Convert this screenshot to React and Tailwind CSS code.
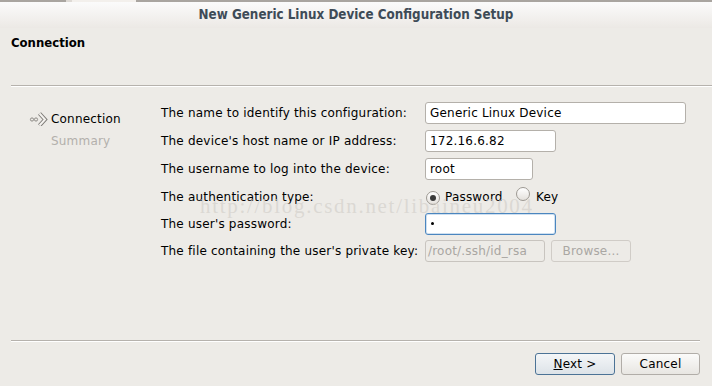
import React from 'react';

const font = { fontFamily: '"DejaVu Sans", "Liberation Sans", sans-serif' };
const condensed = { fontFamily: '"DejaVu Sans Condensed", "DejaVu Sans", sans-serif', fontStretch: 'condensed' };

function Radio({ checked }) {
  return (
    <span className="relative inline-flex h-[14px] w-[14px] items-center justify-center rounded-full border border-[#9d9993] bg-gradient-to-b from-white to-[#e4e1dc]">
      {checked && <span className="h-[6px] w-[6px] rounded-full bg-[#3a3a3a]" />}
    </span>
  );
}

function NavArrow() {
  return (
    <svg width="20" height="14" viewBox="0 0 20 14">
      <circle cx="3" cy="7.5" r="1.6" fill="none" stroke="#8d8a86" strokeWidth="1" />
      <circle cx="7" cy="7.5" r="1.6" fill="none" stroke="#8d8a86" strokeWidth="1" />
      <polyline points="10.5,1.5 16,7.5 10.5,13.5" fill="none" stroke="#7e7b77" strokeWidth="4" strokeLinejoin="miter" />
      <polyline points="10.5,1.5 16,7.5 10.5,13.5" fill="none" stroke="#f4f2ef" strokeWidth="2" strokeLinejoin="miter" />
    </svg>
  );
}

export default function App() {
  const rows = [
    { label: 'The name to identify this configuration:', h: 'h-[28px]', field: (
      <div className="flex h-[22px] w-[261px] items-center rounded-[3px] border border-[#b4b0aa] bg-white px-[4px]">Generic Linux Device</div>
    ) },
    { label: "The device's host name or IP address:", h: 'h-[28px]', field: (
      <div className="flex h-[22px] w-[131px] items-center rounded-[3px] border border-[#b4b0aa] bg-white px-[4px]">172.16.6.82</div>
    ) },
    { label: 'The username to log into the device:', h: 'h-[28px]', field: (
      <div className="flex h-[22px] w-[108px] items-center rounded-[3px] border border-[#b4b0aa] bg-white px-[4px]">root</div>
    ) },
    { label: 'The authentication type:', h: 'h-[27px]', field: (
      <div className="flex items-center">
        <span className="ml-[1px]"><Radio checked /></span>
        <span className="ml-[5px] w-[66px]">Password</span>
        <span className="ml-[5px]"><Radio /></span>
        <span className="ml-[6px]">Key</span>
      </div>
    ) },
    { label: "The user's password:", h: 'h-[27px]', field: (
      <div className="flex h-[22px] w-[131px] items-center rounded-[3px] border border-[#4b86bf] bg-white px-[5px] shadow-[inset_0_0_0_1px_#cfe0f0]">
        <span className="h-[3px] w-[3px] rounded-full bg-black" />
      </div>
    ) },
    { label: "The file containing the user's private key:", h: 'h-[28px]', field: (
      <div className="flex items-center gap-[6px]">
        <div className="flex h-[22px] w-[120px] items-center rounded-[3px] border border-[#c8c4bf] bg-[#edebe7] px-[2px] text-[#a9a6a2]">/root/.ssh/id_rsa</div>
        <div className="flex h-[22px] w-[80px] items-center justify-center rounded-[3px] border border-[#d0ccc7] text-[#aaa7a3]">Browse...</div>
      </div>
    ) },
  ];

  return (
    <div className="relative flex h-[386px] w-[712px] flex-col overflow-hidden bg-[#edebe7] text-[12px] tracking-[0.2px] text-black" style={font}>
      <div className="flex h-[2px]">
        <div className="w-[66px] bg-[#a9a5a0]" />
        <div className="w-[6px] bg-[#dedad5]" />
        <div className="w-[64px] bg-[#f3f0ec]" />
        <div className="flex-1 bg-[#a9a5a0]" />
      </div>
      <div className="flex h-[26px] items-center justify-center bg-gradient-to-b from-[#fbfbfb] to-[#ece9e5] text-[13.3px] font-bold tracking-normal text-[#3e4b57]" style={condensed}>
        New Generic Linux Device Configuration Setup
      </div>
      <div className="flex h-[29px] items-center pl-[11px] text-[13px] font-bold tracking-normal" style={condensed}>
        Connection
      </div>
      <div className="mt-[28px] ml-[11px] border-t border-b border-t-[#b6b2ad] border-b-white" />
      <div className="flex pt-[12px]">
        <div className="w-[161px] pl-[29px] pt-[10px]">
          <div className="flex h-[20px] items-center">
            <NavArrow />
            <span className="ml-[2px]">Connection</span>
          </div>
          <div className="flex h-[24px] items-center pl-[22px] text-[#b3b0ac]">Summary</div>
        </div>
        <div className="flex flex-col">
          {rows.map((r, i) => (
            <div key={i} className={`flex items-center ${r.h}`}>
              <div className="w-[264px]">{r.label}</div>
              {r.field}
            </div>
          ))}
        </div>
      </div>
      <div className="mt-[75px] ml-[11px] mr-[12px] border-t border-b border-t-[#b6b2ad] border-b-white" />
      <div className="flex justify-end gap-[6px] pr-[12px] pt-[11px]">
        <div className="flex h-[22px] w-[80px] items-center justify-center rounded-[3px] border border-[#4c7396] bg-gradient-to-b from-[#f4f6f8] to-[#dde3e8]">
          <span className="underline">N</span>ext &gt;
        </div>
        <div className="flex h-[22px] w-[79px] items-center justify-center rounded-[3px] border border-[#b1ada8] bg-gradient-to-b from-[#fbfbfa] to-[#e8e6e2]">Cancel</div>
      </div>
      <div className="pointer-events-none absolute left-[200px] top-[191px] text-[21px] tracking-[1.7px] text-[#d3d0cb]/70" style={{ fontFamily: '"Liberation Serif", serif' }}>
        http://blog.csdn.net/libaineu2004
      </div>
    </div>
  );
}
